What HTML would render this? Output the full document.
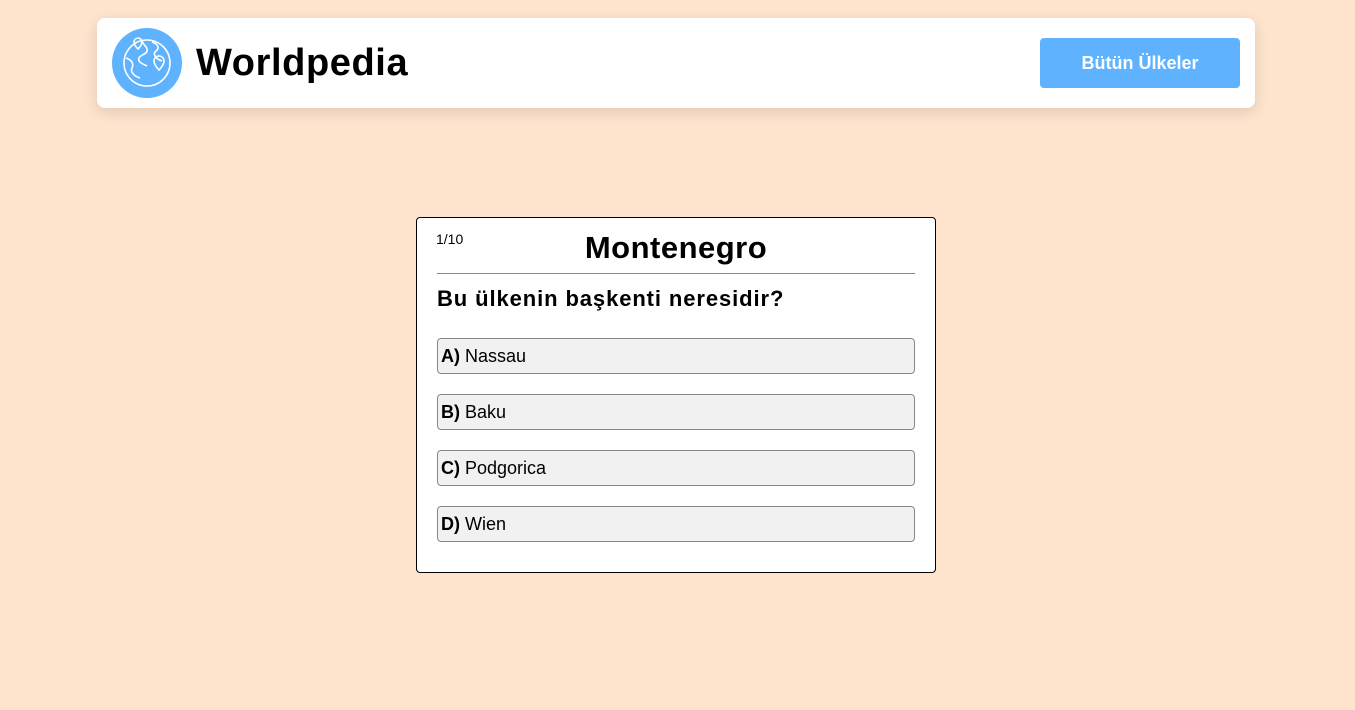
<!DOCTYPE html>
<html><head><style>
*{box-sizing:border-box;margin:0;padding:0}
body{width:1355px;height:710px;background:#fee4cc;font-family:"Liberation Sans",sans-serif;position:relative;overflow:hidden}
.hdr{position:absolute;left:97px;top:18px;width:1158px;height:90px;background:#fff;border-radius:8px;box-shadow:0 4px 14px rgba(0,0,0,.12)}
.logo{position:absolute;left:15px;top:10px;width:70px;height:70px;border-radius:50%;background:#5eb2fe}
.title{position:absolute;left:99px;top:24px;font-size:38px;font-weight:bold;color:#000;letter-spacing:.6px}
.btn{position:absolute;left:943px;top:20px;width:200px;height:50px;background:#5eb2fe;border-radius:4px;color:#fff;font-weight:bold;font-size:18px;text-align:center;line-height:50px}
.card{position:absolute;left:416px;top:217px;width:520px;height:356px;background:#fff;border:1px solid #000;border-radius:4px}
.num{position:absolute;left:19px;top:13px;font-size:14px}
.cn{position:absolute;left:0;width:100%;top:12px;text-align:center;font-size:31px;font-weight:bold;letter-spacing:.5px}
.line{position:absolute;left:20px;top:55px;width:478px;border-top:1px solid #888}
.q{position:absolute;left:20px;top:68px;font-size:22px;font-weight:bold;letter-spacing:.9px}
.opt{position:absolute;left:20px;width:478px;height:36px;background:#f1f1f1;border:1px solid #888;border-radius:4px;font-size:18px;line-height:34px;padding-left:3px}
</style></head><body>
<div class="hdr">
<div class="logo"><svg width="70" height="70" viewBox="0 0 70 70" fill="none" stroke="#fff" stroke-width="1.6"><circle cx="35" cy="35" r="23"/><path d="M14 30c6 2 8 6 6 10s2 8 8 10M30 13c2 5 6 6 5 10s-6 3-8 7 4 6 8 8M40 14c6 2 8 6 4 9s0 8 6 10"/><path d="M22 14a4 4 0 0 1 8 0c0 3-4 7-4 7s-4-4-4-7z"/><path d="M42 33a5 5 0 0 1 10 0c0 4-5 9-5 9s-5-5-5-9z"/></svg></div>
<div class="title">Worldpedia</div>
<div class="btn">Bütün Ülkeler</div>
</div>
<div class="card">
<div class="num">1/10</div>
<div class="cn">Montenegro</div>
<div class="line"></div>
<div class="q">Bu ülkenin başkenti neresidir?</div>
<div class="opt" style="top:120px"><b>A)</b> Nassau</div>
<div class="opt" style="top:176px"><b>B)</b> Baku</div>
<div class="opt" style="top:232px"><b>C)</b> Podgorica</div>
<div class="opt" style="top:288px"><b>D)</b> Wien</div>
</div>
</body></html>
